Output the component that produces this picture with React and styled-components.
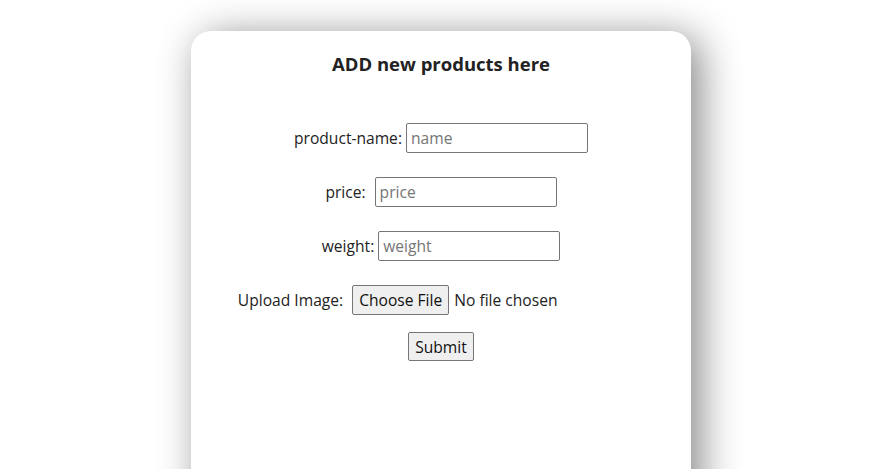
import styled, { createGlobalStyle } from 'styled-components';

const GlobalStyle = createGlobalStyle`
  html, body {
    margin: 0;
    background: #fff;
    font-family: 'Open Sans', 'Noto Sans', sans-serif;
    color: #222;
  }
`;

const Page = styled.div`
  display: flex;
  justify-content: center;
  padding: 31px 0 0 11px;
  height: 469px;
  box-sizing: border-box;
  overflow: hidden;
`;

const Card = styled.div`
  width: 500px;
  min-height: 560px;
  background: #fff;
  border-radius: 20px;
  box-shadow: 9px 6px 40px rgba(0, 0, 0, 0.48);
  padding-top: 20px;
  box-sizing: border-box;
`;

const Title = styled.h3`
  margin: 0 0 46px;
  text-align: center;
  font-size: 18.5px;
  line-height: 26px;
  font-weight: 700;
  color: #222;
`;

const Form = styled.form`
  display: flex;
  flex-direction: column;
  align-items: center;
`;

const Row = styled.div`
  display: flex;
  align-items: center;
  justify-content: center;
  gap: ${({ $gap }) => $gap}px;
  height: 30px;
  margin-bottom: ${({ $after }) => $after}px;
  font-size: 15.6px;
`;

const Label = styled.label`
  color: #222;
`;

const TextInput = styled.input`
  width: 182px;
  height: 30px;
  box-sizing: border-box;
  border: 1px solid #767676;
  border-radius: 2px;
  padding: 0 4px;
  font: inherit;
  font-size: 15.6px;
  color: #222;
  outline: none;

  &::placeholder {
    color: #757575;
  }
`;

const FileField = styled.label`
  display: flex;
  align-items: center;
  gap: 5px;
  width: 292px;
  cursor: pointer;

  input {
    display: none;
  }
`;

const FakeButton = styled.span`
  display: inline-flex;
  align-items: center;
  justify-content: center;
  height: 30px;
  padding: 0 6px;
  box-sizing: border-box;
  background: #efefef;
  border: 1px solid #767676;
  border-radius: 2px;
  color: #111;
`;

const SubmitButton = styled.button`
  width: 66px;
  height: 29px;
  padding: 0;
  background: #efefef;
  border: 1px solid #767676;
  border-radius: 2px;
  font: inherit;
  font-size: 15.6px;
  color: #111;
`;

export default function App() {
  return (
    <>
      <GlobalStyle />
      <Page>
        <Card>
          <Title>ADD new products here</Title>
          <Form onSubmit={(e) => e.preventDefault()}>
            <Row $gap={4} $after={24}>
              <Label htmlFor="pname">product-name:</Label>
              <TextInput id="pname" placeholder="name" />
            </Row>
            <Row $gap={9} $after={24}>
              <Label htmlFor="price">price:</Label>
              <TextInput id="price" placeholder="price" />
            </Row>
            <Row $gap={4} $after={24}>
              <Label htmlFor="weight">weight:</Label>
              <TextInput id="weight" placeholder="weight" />
            </Row>
            <Row $gap={9} $after={17}>
              <Label>Upload Image:</Label>
              <FileField>
                <input type="file" />
                <FakeButton>Choose File</FakeButton>
                <span>No file chosen</span>
              </FileField>
            </Row>
            <SubmitButton type="submit">Submit</SubmitButton>
          </Form>
        </Card>
      </Page>
    </>
  );
}
